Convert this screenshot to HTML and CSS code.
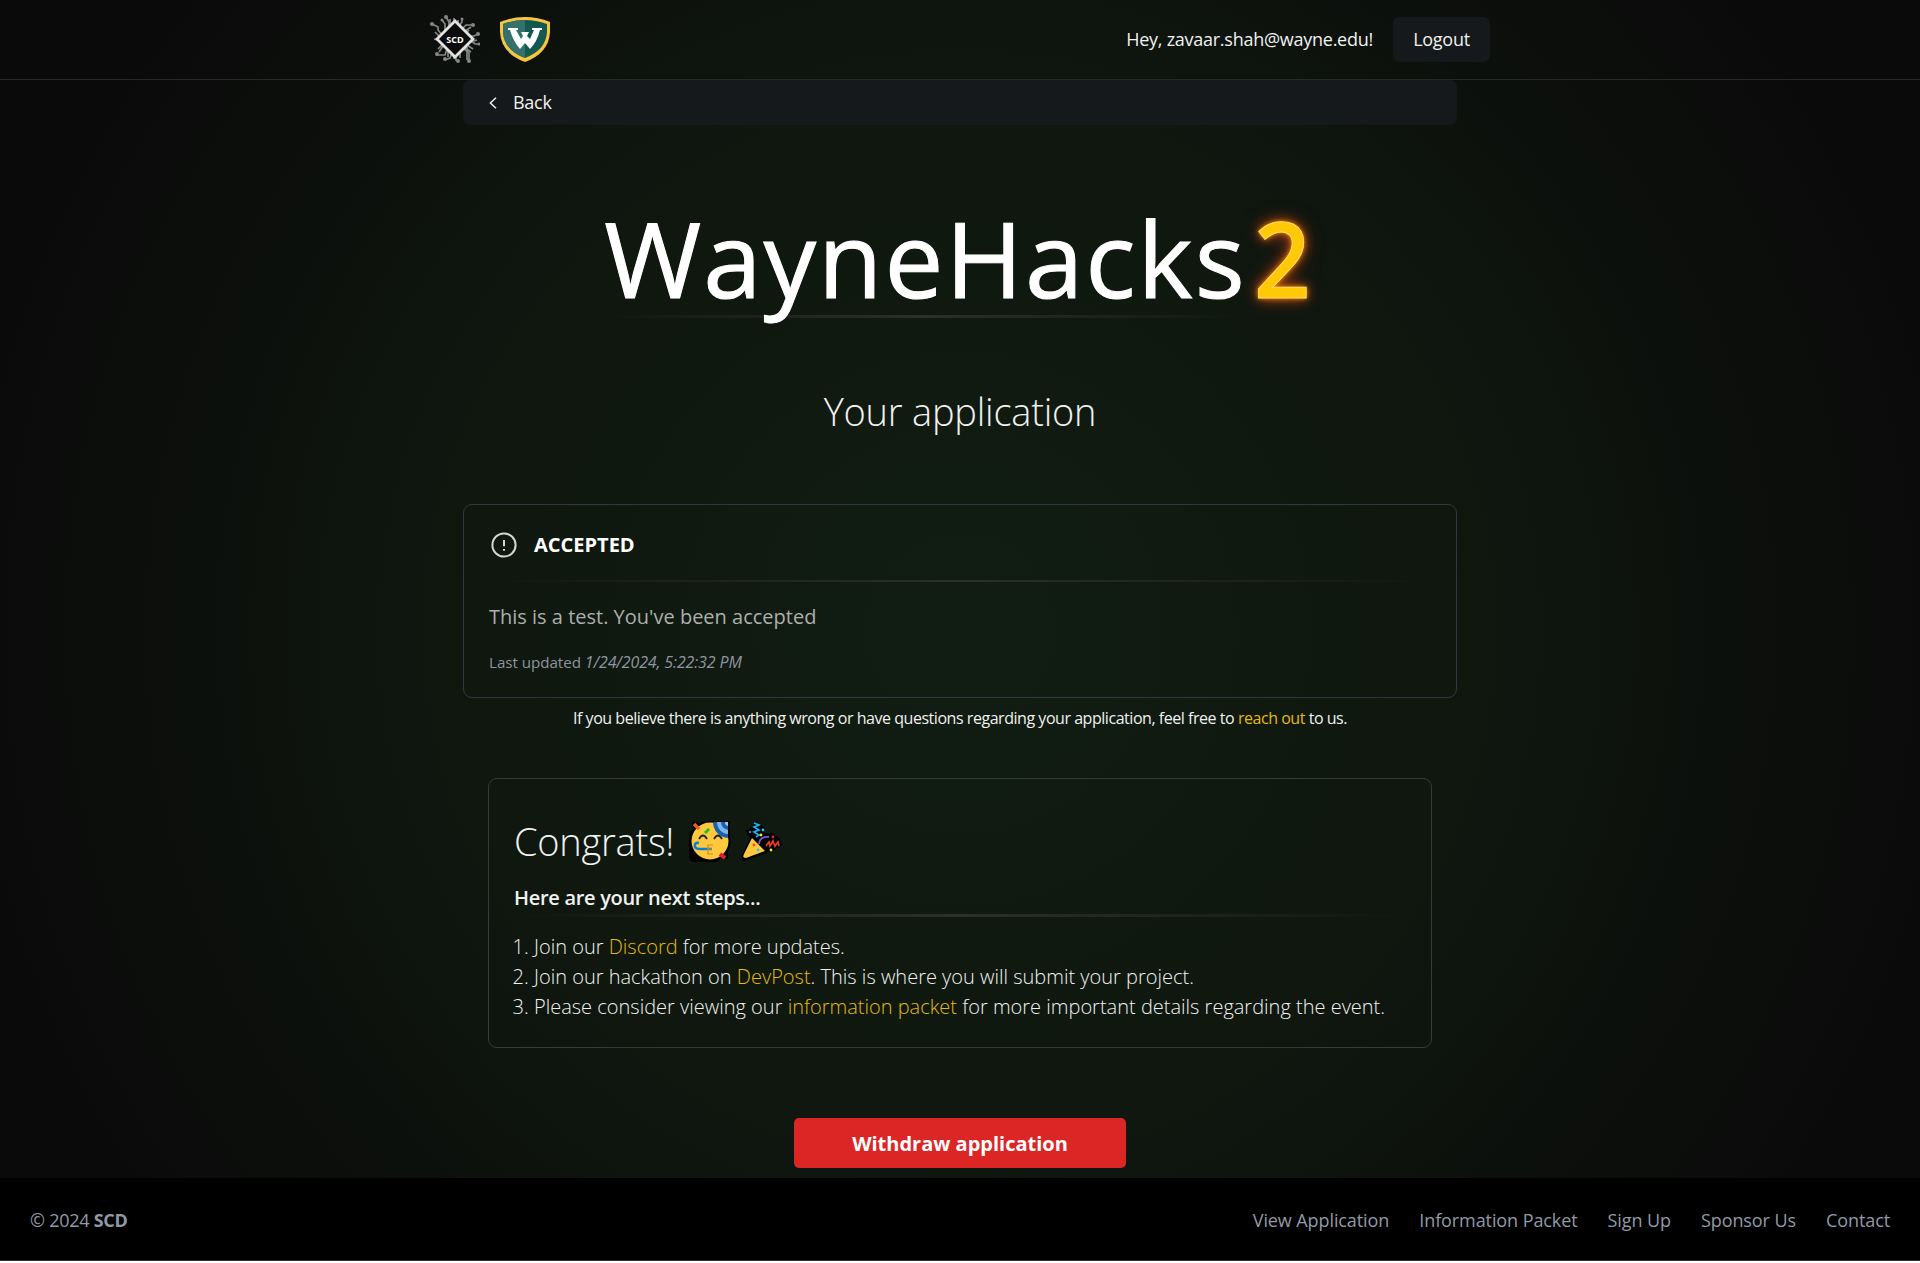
FILE: index.html
```html
<!DOCTYPE html>
<html lang="en">
<head>
<meta charset="utf-8">
<title>WayneHacks 2 - Your application</title>
<link rel="stylesheet" href="styles.css">
</head>
<body>
<div class="page">
  <header class="nav">
    <div class="nav-inner">
      <div class="logos">
        <svg class="logo-scd" viewBox="0 0 50 50" width="50" height="50">
          <g fill="none" stroke="#858585" stroke-width="1.7">
            <path d="M12 20L8 15V12L2 9M15 17V9L12 5M19 13V7L16 2M24 8V3M29 11L32 7V3M32 14L36 10H43M36 18L39 15M39 21H44L48 19M40 25L45 29H49M37 30L43 34M33 33L39 38V46M30 36V43M26 39V46M22 38L20 43L15 45M17 34L15 40H6M13 31L9 37M11 26L4 24"/>
            <path d="M20 10V4M28 9V5M35 16L41 12M41 27L47 25M35 33L41 37M24 40V44M18 36V42M12 30L8 34M9 21L5 17M37 32V45"/>
          </g>
          <g fill="#858585"><circle cx="2" cy="9" r="2"/><circle cx="16" cy="2" r="2"/><circle cx="12" cy="5" r="1.5"/><circle cx="32" cy="4" r="1.5"/><circle cx="43" cy="10" r="2"/><circle cx="48" cy="19" r="2"/><circle cx="49" cy="29" r="1.5"/><circle cx="39" cy="46" r="2"/><circle cx="28" cy="46" r="2"/><circle cx="15" cy="44" r="2"/><circle cx="7" cy="39" r="2"/></g>
          <path d="M25 6L43 24L25 42L7 24Z" fill="#0b0b0b" stroke="#e2e2e2" stroke-width="2.8"/>
          <text x="25" y="27.5" class="scd-text" text-anchor="middle">SCD</text>
        </svg>
        <svg class="logo-wsu" viewBox="0 0 50 45" width="50" height="45">
          <path d="M0 5Q12 0 25 0T50 5V15Q49 36 25 45Q1 36 0 15Z" fill="#f9c440"/>
          <path d="M3 7Q14 3 25 3T47 7V15Q46 33 25 41Q4 33 3 15Z" fill="#14594f"/>
          <path d="M25 3Q14 3 3 7V15Q4 33 25 41Z" fill="#35706a"/>
          <path d="M8 11H18V13H16L21 22L23 19L21 15H29L27 19L30 22L34 13H32V11H42V13H40Q37 25 30 32L25 26L20 32Q13 24 10 13H8Z" fill="#fff"/>
        </svg>
      </div>
      <div class="account">
        <span class="hello">Hey, zavaar.shah@wayne.edu!</span>
        <button class="logout"><span>Logout</span></button>
      </div>
    </div>
  </header>
  <main>
    <a class="back">
      <svg viewBox="0 0 8 12" width="8" height="12"><path d="M7 .8L1.4 6L7 11.2" fill="none" stroke="#eee" stroke-width="1.5"/></svg>
      <span>Back</span>
    </a>
    <h1 class="title"><span class="name">WayneHacks</span><span class="two">2</span></h1>
    <div class="rule title-rule"></div>
    <h2 class="subtitle"><span>Your application</span></h2>
    <section class="status">
      <div class="status-head">
        <svg viewBox="0 0 26 26" width="26" height="26"><circle cx="13" cy="13" r="11.6" fill="none" stroke="#d4d6d4" stroke-width="2"/><path d="M13 8V14.2M13 17V18.8" stroke="#d4d6d4" stroke-width="2"/></svg>
        <strong>ACCEPTED</strong>
      </div>
      <div class="rule"></div>
      <p class="message"><span>This is a test. You've been accepted</span></p>
      <p class="updated"><span>Last updated</span> <em>1/24/2024, 5:22:32 PM</em></p>
    </section>
    <p class="help"><span>If you believe there is anything wrong or have questions regarding your application, feel free to <a>reach out</a> to us.</span></p>
    <section class="next">
      <h2 class="congrats">
        <span>Congrats!</span>
        <svg viewBox="0 0 42 42" width="42" height="42">
          <path d="M3 1L10 3Q15 1 24 1H41V16Q43 24 39 31V39L32 38A20 20 0 1 1 4 10Z" fill="#000"/>
          <circle cx="21" cy="21" r="18.5" fill="#ffc83d"/>
          <path d="M24 2H39V18A16 16 0 0 1 24 2Z" fill="#1463af"/>
          <path d="M28 2H39V14A12 12 0 0 1 28 2Z" fill="#7eb6e8"/>
          <path d="M32 2H39V10A8 8 0 0 1 32 2Z" fill="#1463af"/>
          <path d="M36 2H39V6A4 4 0 0 1 36 2Z" fill="#9bc9f2"/>
          <path d="M10 19Q14 12 18 19M25 19Q29 12 33 19" fill="none" stroke="#242424" stroke-width="1.8"/>
          <path d="M10 23Q5 22 6 27Q7 29 11 29H23" fill="none" stroke="#087fda" stroke-width="2.6"/>
          <path d="M24 25H19V29H23M19 29V34H24" fill="none" stroke="#d58b19" stroke-width="1.2"/>
          <path d="M16 13L20 9" stroke="#21bd24" stroke-width="3"/><path d="M5 4L10 9" stroke="#ef5a26" stroke-width="3.4"/><path d="M31 34L36 38" stroke="#e81d32" stroke-width="4"/>
        </svg>
        <svg viewBox="0 0 42 42" width="42" height="42">
          <path d="M4 41Q0 40 2 35L10 18L6 11L12 7L17 1L25 8L23 14L33 13L40 19L42 25L34 30L24 34Z" fill="#000"/>
          <path d="M12 18L25 31L6 38Q2 38 4 34Z" fill="#ffc83d"/>
          <path d="M14 3L19 5L14 7L19 10L14 12L19 15L16 17" fill="none" stroke="#18b6f4" stroke-width="1.7"/>
          <path d="M19 24Q20 16 29 17" fill="none" stroke="#7857ce" stroke-width="1.8"/>
          <path d="M26 26L29 22L30 26L33 21L35 26L38 22L39 26" fill="none" stroke="#f03b20" stroke-width="1.7"/>
          <g fill="#25c6ef"><circle cx="23" cy="10" r="1.4"/><circle cx="18" cy="30" r="1.4"/></g><circle cx="10" cy="12" r="1.3" fill="#7857ce"/><circle cx="14" cy="25" r="1.4" fill="#f14b24"/><circle cx="33" cy="17" r="1.4" fill="#ce3020"/><g fill="#ffe329"><circle cx="21" cy="15" r="1.4"/><circle cx="31" cy="30" r="1.4"/></g>
        </svg>
      </h2>
      <h3 class="steps-title"><span>Here are your next steps...</span></h3>
      <div class="rule steps-rule"></div>
      <ol>
        <li>Join our <a>Discord</a> for more updates.</li>
        <li>Join our hackathon on <a>DevPost</a>. This is where you will submit your project.</li>
        <li>Please consider viewing our <a>information packet</a> for more important details regarding the event.</li>
      </ol>
    </section>
    <button class="withdraw"><span>Withdraw application</span></button>
  </main>
  <footer>
    <p>© 2024 <strong>SCD</strong></p>
    <nav><a>View Application</a><a>Information Packet</a><a>Sign Up</a><a>Sponsor Us</a><a>Contact</a></nav>
  </footer>
</div>
</body>
</html>
```
FILE: styles.css
```css
* { box-sizing: border-box; }
body { margin: 0; background: #fff; color: #f0f1f0; font-family: "Open Sans", "Noto Sans", sans-serif; font-size: 18px; letter-spacing: -0.26px; white-space: nowrap; }
h1, h2, h3, p, ol { margin: 0; padding: 0; }
button { border: 0; padding: 0; font: inherit; letter-spacing: inherit; color: inherit; }
.page { height: 1261px; display: flex; flex-direction: column; background: radial-gradient(circle at 50% 50%, #111d12 0, #0f170f 500px, #0a0a0a 1000px); }
.nav { height: 80px; border-bottom: 1px solid #252a26; }
.nav-inner { width: 1060px; height: 79px; margin: 0 auto; display: flex; align-items: center; justify-content: space-between; }
.logos { display: flex; align-items: center; gap: 20px; }
.logo-scd { margin-top: 1px; }
.scd-text { font: 700 9px "Open Sans", sans-serif; letter-spacing: 0; fill: #fff; }
.account { display: flex; align-items: center; gap: 20px; font-weight: 500; }
.hello { padding-bottom: 2px; }
.logout { width: 97px; height: 45px; padding-bottom: 2px; border-radius: 7px; background: #15191b; }
main { flex: 1; width: 994px; margin: 0 auto; display: flex; flex-direction: column; }
.back { height: 45px; border-radius: 7px; background: #15191b; padding-left: 26px; display: flex; align-items: center; gap: 16px; font-weight: 500; }
.back span { padding-bottom: 2px; }
.title { position: relative; height: 150px; margin-top: 40px; display: flex; justify-content: center; gap: 7px; font-size: 105px; line-height: 186px; letter-spacing: 2px; font-weight: 500; color: #fff; }
.name { -webkit-text-stroke: 1px #fff; }
.two { transform: scaleX(0.94); transform-origin: left; font-weight: 600; color: #ffca05; -webkit-text-stroke: 1px #ffda70; text-shadow: 0 0 5px #ff9b00, 0 0 12px #c95408, 0 0 20px #7b281c; }
.rule { height: 2px; background: linear-gradient(90deg, transparent, #2a302b, transparent); }
.title-rule { width: 640px; height: 3px; margin-left: 140px; }
.subtitle { height: 60px; margin-top: 63px; text-align: center; font-size: 38px; line-height: 60px; letter-spacing: -0.22px; font-weight: 300; }
.status { height: 194px; margin-top: 63px; padding: 0 25px; border: 1px solid #303844; border-radius: 9px; }
.status-head { height: 75px; padding: 4px 0 0 2px; display: flex; align-items: center; gap: 17px; font-size: 20px; letter-spacing: 0; color: #fff; }
.message { height: 32px; margin-top: 19px; line-height: 32px; font-size: 20px; letter-spacing: 0; font-weight: 500; color: #adafad; }
.updated { height: 24px; margin-top: 17px; line-height: 24px; font-size: 15.2px; letter-spacing: -0.05px; color: #8e949f; }
.updated em { font-size: 16px; letter-spacing: -0.14px; }
.help { height: 24px; margin-top: 8px; text-align: center; font-size: 16px; line-height: 24px; letter-spacing: -0.46px; font-weight: 500; }
a { color: inherit; }
.help a, li a { color: #e5b910; }
.next { width: 944px; height: 270px; margin: 48px auto 0; padding: 0 25px; border: 1px solid #343c35; border-radius: 9px; }
.congrats { height: 60px; margin-top: 32px; display: flex; align-items: center; font-size: 38px; letter-spacing: -0.25px; font-weight: 300; }
.congrats svg { margin-left: 15px; }
.congrats svg + svg { margin-left: 9px; }
.steps-title { height: 32px; margin-top: 11px; font-size: 20px; line-height: 32px; letter-spacing: -0.3px; font-weight: 600; }
.steps-rule { height: 3px; }
ol { padding-left: 20px; margin-top: 15px; font-size: 20px; line-height: 30px; letter-spacing: 0; font-weight: 300; }
.withdraw { width: 332px; height: 50px; margin: 70px auto 0; border-radius: 5px; background: #dc2626; color: #fff; font-size: 20px; letter-spacing: 0; font-weight: 700; }
footer { height: 83px; padding: 1px 30px 0; background: #000; border-bottom: 1px solid #333; display: flex; align-items: center; justify-content: space-between; font-weight: 500; color: #9299a6; }
footer nav { display: flex; gap: 30px; letter-spacing: -0.09px; }
```
